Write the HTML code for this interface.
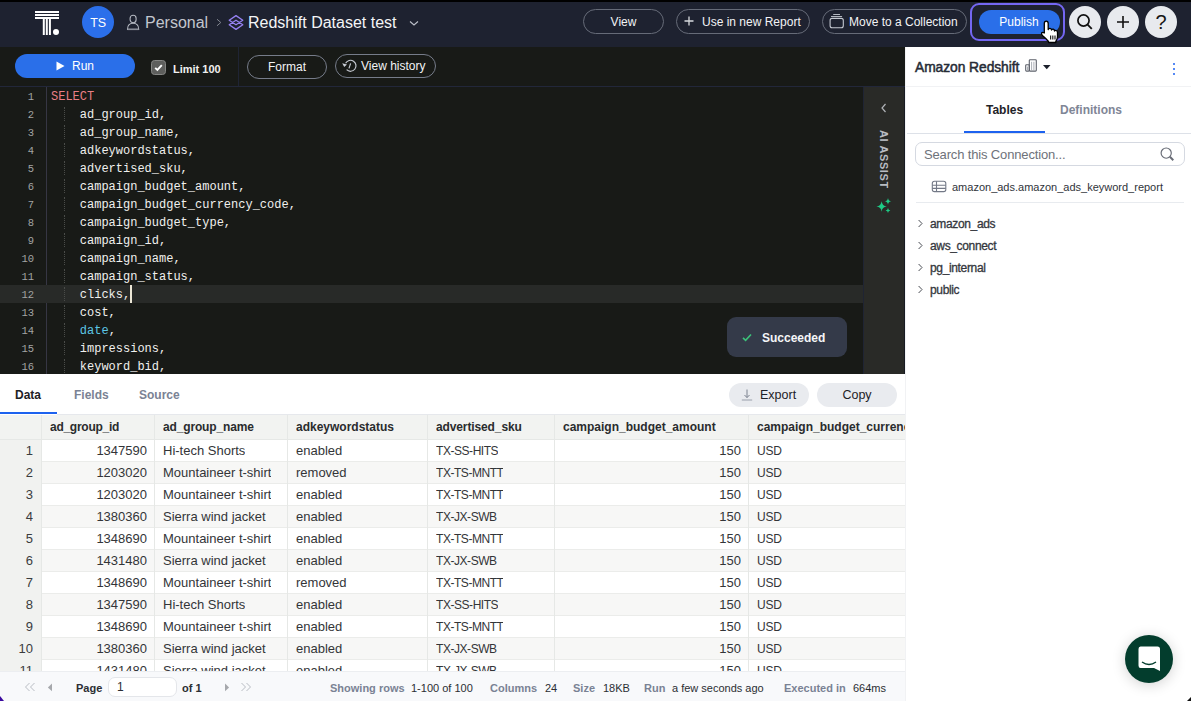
<!DOCTYPE html>
<html><head><meta charset="utf-8">
<style>
*{box-sizing:border-box;margin:0;padding:0}
html,body{width:1191px;height:701px;overflow:hidden;background:#fff;font-family:"Liberation Sans",sans-serif}
.a{position:absolute}
#top{left:0;top:0;width:1191px;height:2px;background:#000}
#hdr{left:0;top:2px;width:1191px;height:45px;background:#1e2230}
.pill{position:absolute;border:1px solid #666b78;border-radius:13px;color:#f2f3f5;font-size:12px;line-height:23px;padding-top:1px;white-space:nowrap}
.circ{position:absolute;width:32px;height:32px;border-radius:50%;background:#e8eaee;top:6px}
#tb{left:0;top:47px;width:905px;height:40px;background:#181a17;border-bottom:1px solid #22273a}
#ed{left:0;top:87px;width:863px;height:287px;background:#181a17;overflow:hidden}
.ln{position:absolute;left:0;width:34px;text-align:right;font:10.5px/18px "Liberation Mono",monospace;color:#a3a5a4}
.cd{position:absolute;left:51px;font:12px/18px "Liberation Mono",monospace;color:#f0f0ee;white-space:pre}
#side{left:863px;top:87px;width:42px;height:287px;background:#292a27;border-left:1px solid #1f2433;border-right:1px solid #181b22}
#rp{left:905px;top:47px;width:286px;height:654px;background:#fff;border-left:1px solid #f1f2f4}
#res{left:0;top:374px;width:905px;height:327px;background:#fff;overflow:hidden}
.th{position:absolute;top:0;height:24px;font:bold 12px/24px "Liberation Sans",sans-serif;color:#2a2c2e;white-space:nowrap;overflow:hidden}
.td{position:absolute;height:22px;font:13px/22px "Liberation Sans",sans-serif;color:#333538;white-space:nowrap;overflow:hidden}
</style></head><body>
<div id="top" class="a"></div>
<div id="hdr" class="a"></div>

<!-- logo -->
<svg class="a" style="left:34px;top:10px" width="26" height="26" viewBox="0 0 26 26">
  <rect x="1" y="1" width="24" height="2" fill="#fff"/>
  <rect x="1" y="4" width="24" height="2" fill="#fff"/>
  <rect x="1" y="7" width="24" height="2" fill="#fff"/>
  <rect x="8.8" y="9" width="2" height="16" fill="#fff"/>
  <rect x="11.8" y="9" width="2" height="16" fill="#fff"/>
  <rect x="14.9" y="9" width="2" height="16" fill="#fff"/>
  <circle cx="22" cy="22" r="3" fill="#fff"/>
</svg>

<!-- avatar -->
<div class="a" style="left:82px;top:6px;width:32px;height:32px;border-radius:50%;background:#2b6fea;color:#fff;font:12.5px/34px 'Liberation Sans';text-align:center;letter-spacing:-0.3px">TS</div>
<svg class="a" style="left:126px;top:14px" width="14" height="17" viewBox="0 0 14 17"><rect x="4.1" y="1.2" width="6" height="7.6" rx="3" fill="none" stroke="#b4b8c1" stroke-width="1.1"/><path d="M1.5 15.4 Q1.5 9.3 7.1 9.3 Q12.7 9.3 12.7 15.4 Z" fill="none" stroke="#b4b8c1" stroke-width="1.1"/><path d="M1.5 15.4 H12.7" stroke="#8a8e98" stroke-width="1.4"/></svg>
<div class="a" style="left:145px;top:13px;font:16px/20px 'Liberation Sans';color:#c3c6ce">Personal</div>
<svg class="a" style="left:215px;top:18px" width="8" height="9" viewBox="0 0 8 9"><path d="M2 1.2 L5.8 4.5 L2 7.8" fill="none" stroke="#80848e" stroke-width="1"/></svg>
<svg class="a" style="left:228px;top:14px" width="16" height="17" viewBox="0 0 16 17"><path d="M8 1.6 L14.8 6.2 L8 10.8 L1.2 6.2 Z M8 6.2 L14.8 10.8 L8 15.4 L1.2 10.8 Z" fill="none" stroke="#9682f3" stroke-width="1.3" stroke-linejoin="round"/></svg>
<div class="a" style="left:248px;top:13px;font:16px/20px 'Liberation Sans';color:#f4f5f7">Redshift Dataset test</div>
<svg class="a" style="left:409px;top:20px" width="10" height="7" viewBox="0 0 10 7"><path d="M1 1.5 L5 5 L9 1.5" fill="none" stroke="#bcc0c9" stroke-width="1.1"/></svg>

<!-- header buttons -->
<div class="pill" style="left:583px;top:9px;width:81px;height:25px;text-align:center">View</div>
<div class="pill" style="left:676px;top:9px;width:134px;height:25px;padding-left:25px">Use in new Report</div>
<svg class="a" style="left:684px;top:16px" width="10" height="10" viewBox="0 0 10 10"><path d="M5 0.5 V9.5 M0.5 5 H9.5" stroke="#d8dade" stroke-width="1.3"/></svg>
<div class="pill" style="left:822px;top:9px;width:145px;height:25px;padding-left:26px">Move to a Collection</div>
<svg class="a" style="left:829px;top:13px" width="16" height="16" viewBox="0 0 16 16"><path d="M4.6 1.5 H10.6 M2.4 3.5 H12.7" stroke="#c4c8d0" stroke-width="0.9" stroke-linecap="round"/><rect x="1.1" y="5.4" width="13.2" height="9.4" rx="2" fill="none" stroke="#c4c8d0" stroke-width="1.1"/></svg>
<div class="a" style="left:970px;top:3px;width:95px;height:38px;border:2px solid #7467f2;border-radius:9px"></div>
<div class="a" style="left:979px;top:10px;width:81px;height:24px;border-radius:12px;background:#2a6fe9;color:#fff;font:12px/24px 'Liberation Sans';text-align:center;padding-right:1px">Publish</div>
<div class="circ" style="left:1069px"></div>
<div class="circ" style="left:1107px"></div>
<div class="circ" style="left:1145px"></div>
<svg class="a" style="left:1076px;top:13px" width="18" height="18" viewBox="0 0 18 18"><circle cx="7.5" cy="7.5" r="5.6" fill="none" stroke="#111" stroke-width="1.7"/><path d="M11.6 11.6 L15.8 15.8" stroke="#111" stroke-width="1.8"/></svg>
<svg class="a" style="left:1116px;top:15px" width="14" height="14" viewBox="0 0 14 14"><path d="M7 1 V13 M1 7 H13" stroke="#111" stroke-width="1.6"/></svg>
<div class="a" style="left:1145px;top:6px;width:32px;height:32px;font:20px/32px 'Liberation Sans';color:#151515;text-align:center">?</div>
<!-- cursor -->
<svg class="a" style="left:1038px;top:20px" width="24" height="24" viewBox="0 0 24 24"><path d="M8.2 1.2 Q10.2 1.2 10.2 3.5 L10.2 9.5 Q10.5 8.2 12 8.3 Q13.5 8.5 13.5 10 Q14 9 15.3 9.2 Q16.5 9.5 16.5 11 Q17 10.2 18.2 10.5 Q19.5 11 19.5 12.5 L19.5 17 Q19.3 19.5 17.8 21.5 L17.8 22.5 L10.5 22.5 L10.5 21.5 Q8.5 19 5 16 Q3 14.2 3.6 13 Q4.5 11.8 6.3 13 L6.3 3.5 Q6.3 1.2 8.2 1.2 Z" fill="#fff" stroke="#000" stroke-width="1.3" stroke-linejoin="round"/><path d="M12.6 15.5 V19.5 M14.8 15.5 V19.5 M17 15.5 V19.5" stroke="#222" stroke-width="1.2"/></svg>

<!-- editor toolbar -->
<div id="tb" class="a"></div>
<div class="a" style="left:238px;top:47px;width:1px;height:39px;background:#1f2434"></div>
<div class="a" style="left:15px;top:54px;width:120px;height:24px;border-radius:12px;background:#2a6fe9;color:#fff;font:12px/24px 'Liberation Sans';padding-left:57px">Run</div>
<svg class="a" style="left:56px;top:61px" width="9" height="10" viewBox="0 0 9 10"><path d="M0.5 0.5 L8.5 5 L0.5 9.5 Z" fill="#fff"/></svg>
<div class="a" style="left:151px;top:60px;width:15px;height:15px;border-radius:3.5px;background:#5e5f5d;border:1px solid #858684"></div>
<svg class="a" style="left:153px;top:62px" width="11" height="11" viewBox="0 0 11 11"><path d="M2.2 5.8 L4.4 8 L8.8 3.2" fill="none" stroke="#fff" stroke-width="1.9"/></svg>
<div class="a" style="left:173px;top:61px;font:bold 11px/16px 'Liberation Sans';color:#f0f0f0">Limit 100</div>
<div class="pill" style="left:247px;top:55px;width:80px;height:24px;text-align:center;border-color:#767c8a;padding-top:0">Format</div>
<div class="pill" style="left:335px;top:54px;width:101px;height:24px;padding-left:25px;padding-top:0;border-color:#767c8a">View history</div>
<svg class="a" style="left:338px;top:55px" width="24" height="22" viewBox="0 0 24 22"><path d="M7.6 8.3 A5.5 5.5 0 1 1 8.61 14.69" fill="none" stroke="#c9cdd5" stroke-width="1.15"/><path d="M4.2 8.2 L9.0 9.4 L6.2 12.0 Z" fill="#c9cdd5"/><path d="M12.6 8.3 L11.0 13.4" stroke="#c9cdd5" stroke-width="1.15"/></svg>

<!-- editor -->
<div id="ed" class="a">
  <div class="a" style="left:46px;top:0;width:1px;height:288px;background:#363644"></div>
  <div class="a" style="left:0;top:198px;width:863px;height:18px;background:#282a28"></div>
  <div class="a" style="left:64px;top:20px;width:0;height:14px;border-left:1px dotted #4a4c49"></div><div class="a" style="left:64px;top:38px;width:0;height:14px;border-left:1px dotted #4a4c49"></div><div class="a" style="left:64px;top:56px;width:0;height:14px;border-left:1px dotted #4a4c49"></div><div class="a" style="left:64px;top:74px;width:0;height:14px;border-left:1px dotted #4a4c49"></div><div class="a" style="left:64px;top:92px;width:0;height:14px;border-left:1px dotted #4a4c49"></div><div class="a" style="left:64px;top:110px;width:0;height:14px;border-left:1px dotted #4a4c49"></div><div class="a" style="left:64px;top:128px;width:0;height:14px;border-left:1px dotted #4a4c49"></div><div class="a" style="left:64px;top:146px;width:0;height:14px;border-left:1px dotted #4a4c49"></div><div class="a" style="left:64px;top:164px;width:0;height:14px;border-left:1px dotted #4a4c49"></div><div class="a" style="left:64px;top:182px;width:0;height:14px;border-left:1px dotted #4a4c49"></div><div class="a" style="left:64px;top:200px;width:0;height:14px;border-left:1px dotted #4a4c49"></div><div class="a" style="left:64px;top:218px;width:0;height:14px;border-left:1px dotted #4a4c49"></div><div class="a" style="left:64px;top:236px;width:0;height:14px;border-left:1px dotted #4a4c49"></div><div class="a" style="left:64px;top:254px;width:0;height:14px;border-left:1px dotted #4a4c49"></div><div class="a" style="left:64px;top:272px;width:0;height:14px;border-left:1px dotted #4a4c49"></div>
  <div class="ln" style="top:1px">1</div>
  <div class="ln" style="top:19px">2</div>
  <div class="ln" style="top:37px">3</div>
  <div class="ln" style="top:55px">4</div>
  <div class="ln" style="top:73px">5</div>
  <div class="ln" style="top:91px">6</div>
  <div class="ln" style="top:109px">7</div>
  <div class="ln" style="top:127px">8</div>
  <div class="ln" style="top:145px">9</div>
  <div class="ln" style="top:163px">10</div>
  <div class="ln" style="top:181px">11</div>
  <div class="ln" style="top:199px">12</div>
  <div class="ln" style="top:217px">13</div>
  <div class="ln" style="top:235px">14</div>
  <div class="ln" style="top:253px">15</div>
  <div class="ln" style="top:271px">16</div>
  <div class="cd" style="top:1px;color:#e97f86">SELECT</div>
  <div class="cd" style="top:19px">    ad_group_id,</div>
  <div class="cd" style="top:37px">    ad_group_name,</div>
  <div class="cd" style="top:55px">    adkeywordstatus,</div>
  <div class="cd" style="top:73px">    advertised_sku,</div>
  <div class="cd" style="top:91px">    campaign_budget_amount,</div>
  <div class="cd" style="top:109px">    campaign_budget_currency_code,</div>
  <div class="cd" style="top:127px">    campaign_budget_type,</div>
  <div class="cd" style="top:145px">    campaign_id,</div>
  <div class="cd" style="top:163px">    campaign_name,</div>
  <div class="cd" style="top:181px">    campaign_status,</div>
  <div class="cd" style="top:199px">    clicks,</div>
  <div class="cd" style="top:217px">    cost,</div>
  <div class="cd" style="top:235px">    <span style="color:#5cc6e4">date</span>,</div>
  <div class="cd" style="top:253px">    impressions,</div>
  <div class="cd" style="top:271px">    keyword_bid,</div>
  <div class="a" style="left:130px;top:198px;width:2px;height:18px;background:#ebe6d6"></div>
  <!-- toast -->
  <div class="a" style="left:727px;top:230px;width:120px;height:40px;border-radius:9px;background:#343a49"></div>
  <svg class="a" style="left:742px;top:246px" width="10" height="9" viewBox="0 0 10 9"><path d="M1 4.8 L3.6 7.3 L9 1.5" fill="none" stroke="#3cc27a" stroke-width="1.6"/></svg>
  <div class="a" style="left:762px;top:243px;font:bold 12px/16px 'Liberation Sans';color:#f4f5f7">Succeeded</div>
</div>

<!-- AI assist side -->
<div id="side" class="a"></div>
<svg class="a" style="left:880px;top:103px" width="8" height="10" viewBox="0 0 8 10"><path d="M5.5 1 L2 5 L5.5 9" fill="none" stroke="#b0b3b8" stroke-width="1.2"/></svg>
<div class="a" style="left:856px;top:152px;width:56px;height:12px;transform:rotate(90deg);font:bold 11px/12px 'Liberation Sans';color:#b9bcc2;letter-spacing:0.6px;text-align:center;white-space:nowrap">AI ASSIST</div>
<svg class="a" style="left:870px;top:190px" width="30" height="30" viewBox="0 0 30 30"><path d="M11.6 11.3 Q12.12 15.98 16.8 16.5 Q12.12 17.02 11.6 21.7 Q11.08 17.02 6.3999999999999995 16.5 Q11.08 15.98 11.6 11.3Z M18 7.9 Q18.34 10.96 21.4 11.3 Q18.34 11.64 18 14.700000000000001 Q17.66 11.64 14.6 11.3 Q17.66 10.96 18 7.9Z M18 18.1 Q18.24 20.26 20.4 20.5 Q18.24 20.74 18 22.9 Q17.76 20.74 15.6 20.5 Q17.76 20.26 18 18.1Z" fill="#1ecb86"/></svg>

<!-- right panel -->
<div id="rp" class="a">
  <div class="a" style="left:9px;top:12.5px;font:13.8px/16px 'Liberation Sans';color:#262b36;white-space:nowrap;-webkit-text-stroke:0.5px #262b36;letter-spacing:-0.05px">Amazon Redshift</div>
  <svg class="a" style="left:118px;top:11px" width="14" height="15" viewBox="0 0 14 15"><rect x="1.7" y="6.8" width="3.6" height="6.3" rx="0.8" fill="none" stroke="#5d616b" stroke-width="1.1"/><rect x="5.3" y="1.8" width="7" height="11.3" rx="0.8" fill="none" stroke="#5d616b" stroke-width="1.1"/><path d="M3.5 8.6 V12.2 M7.6 3.8 V12.2 M9.9 3.8 V12.2" stroke="#a2a6ae" stroke-width="0.9"/></svg>
  <svg class="a" style="left:137px;top:18px" width="8" height="5" viewBox="0 0 8 5"><path d="M0 0 H7.5 L3.75 4.2 Z" fill="#1c202b"/></svg>
  <div class="a" style="left:266.8px;top:15.5px;width:2.4px;height:2.4px;border-radius:50%;background:#1c62f2"></div>
  <div class="a" style="left:266.8px;top:20.5px;width:2.4px;height:2.4px;border-radius:50%;background:#1c62f2"></div>
  <div class="a" style="left:266.8px;top:25.5px;width:2.4px;height:2.4px;border-radius:50%;background:#1c62f2"></div>
  <div class="a" style="left:0;top:39px;width:286px;height:1px;background:#f1f2f4"></div>
  <div class="a" style="left:80px;top:55px;font:bold 12px/16px 'Liberation Sans';color:#1f2329">Tables</div>
  <div class="a" style="left:154px;top:55px;font:bold 12px/16px 'Liberation Sans';color:#7f8696">Definitions</div>
  <div class="a" style="left:58px;top:84px;width:81px;height:2px;background:#1d62ef"></div>
  <div class="a" style="left:1px;top:86px;width:285px;height:1px;background:#dde1e8"></div>
  <div class="a" style="left:9px;top:95px;width:270px;height:24px;border:1px solid #d5d9e1;border-radius:7px"></div>
  <div class="a" style="left:18px;top:101px;font:13px/14px 'Liberation Sans';color:#6e727a;white-space:nowrap;letter-spacing:-0.15px">Search this Connection...</div>
  <svg class="a" style="left:254px;top:100px" width="16" height="16" viewBox="0 0 16 16"><circle cx="6.2" cy="6.1" r="5.1" fill="none" stroke="#686c76" stroke-width="1.15"/><path d="M9.9 9.8 L13.3 13.2" stroke="#686c76" stroke-width="2"/></svg>
  <svg class="a" style="left:25px;top:133px" width="16" height="13" viewBox="0 0 16 13"><rect x="1.3" y="1.3" width="13.5" height="10.3" rx="2.2" fill="none" stroke="#737987" stroke-width="1.1"/><path d="M1.3 5.3 H14.8 M1.3 8.4 H14.8 M5.5 1.3 V11.6" stroke="#737987" stroke-width="1.1"/></svg>
  <div class="a" style="left:46px;top:133px;font:11px/14px 'Liberation Sans';color:#30343b;white-space:nowrap">amazon_ads.amazon_ads_keyword_report</div>
  <div class="a" style="left:10px;top:155px;width:268px;height:1px;background:#e8ebef"></div>
  <svg class="a" style="left:11px;top:172px" width="7" height="9" viewBox="0 0 7 9"><path d="M1.6 1 L5 4.5 L1.6 8" fill="none" stroke="#4a4d54" stroke-width="1"/></svg>
  <div class="a" style="left:24px;top:170px;font:12px/14px 'Liberation Sans';color:#34373d;white-space:nowrap;letter-spacing:-0.35px;-webkit-text-stroke:0.3px #34373d">amazon_ads</div>
  <svg class="a" style="left:11px;top:194px" width="7" height="9" viewBox="0 0 7 9"><path d="M1.6 1 L5 4.5 L1.6 8" fill="none" stroke="#4a4d54" stroke-width="1"/></svg>
  <div class="a" style="left:24px;top:192px;font:12px/14px 'Liberation Sans';color:#34373d;white-space:nowrap;letter-spacing:-0.35px;-webkit-text-stroke:0.3px #34373d">aws_connect</div>
  <svg class="a" style="left:11px;top:216px" width="7" height="9" viewBox="0 0 7 9"><path d="M1.6 1 L5 4.5 L1.6 8" fill="none" stroke="#4a4d54" stroke-width="1"/></svg>
  <div class="a" style="left:24px;top:214px;font:12px/14px 'Liberation Sans';color:#34373d;white-space:nowrap;letter-spacing:-0.35px;-webkit-text-stroke:0.3px #34373d">pg_internal</div>
  <svg class="a" style="left:11px;top:238px" width="7" height="9" viewBox="0 0 7 9"><path d="M1.6 1 L5 4.5 L1.6 8" fill="none" stroke="#4a4d54" stroke-width="1"/></svg>
  <div class="a" style="left:24px;top:236px;font:12px/14px 'Liberation Sans';color:#34373d;white-space:nowrap;letter-spacing:-0.35px;-webkit-text-stroke:0.3px #34373d">public</div>
</div>

<!-- results -->
<div id="res" class="a">
  <div class="a" style="left:15px;top:13px;font:bold 12px/16px 'Liberation Sans';color:#1d2126">Data</div>
  <div class="a" style="left:74px;top:13px;font:bold 12px/16px 'Liberation Sans';color:#7a8294">Fields</div>
  <div class="a" style="left:139px;top:13px;font:bold 12px/16px 'Liberation Sans';color:#7a8294">Source</div>
  <div class="a" style="left:0;top:38px;width:57px;height:2px;background:#1d62ef"></div>
  <div class="a" style="left:57px;top:40px;width:848px;height:1px;background:#e6e8ec"></div>
  <div class="a" style="left:729px;top:8.5px;width:80px;height:24px;border-radius:12px;background:#e9ebef"></div>
  <svg class="a" style="left:741px;top:15px" width="12" height="12" viewBox="0 0 12 12"><path d="M6 0.5 V8.5 M3.5 6 L6 8.6 L8.5 6" fill="none" stroke="#7d8390" stroke-width="1"/><path d="M0.8 11 H11.2" stroke="#9aa0ab" stroke-width="1"/></svg>
  <div class="a" style="left:760px;top:13px;font:12.5px/16px 'Liberation Sans';color:#1d2126">Export</div>
  <div class="a" style="left:817px;top:8.5px;width:80px;height:24px;border-radius:12px;background:#e9ebef;font:12.5px/25px 'Liberation Sans';color:#1d2126;text-align:center">Copy</div>
  <div id="grid" class="a" style="left:0;top:41px;width:905px;height:257px;overflow:hidden">
<div class="a" style="left:0;top:0;width:905px;height:25px;background:#f2f3f1;border-bottom:1px solid #e6e8e6"></div>
<div class="a" style="left:0;top:25px;width:41px;height:240px;background:#f1f2f0"></div>
<div class="a" style="left:41px;top:25px;width:864px;height:22px;background:#ffffff;border-bottom:1px solid #ebecea"></div>
<div class="a" style="left:41px;top:47px;width:864px;height:22px;background:#f7f7f6;border-bottom:1px solid #ebecea"></div>
<div class="a" style="left:41px;top:69px;width:864px;height:22px;background:#ffffff;border-bottom:1px solid #ebecea"></div>
<div class="a" style="left:41px;top:91px;width:864px;height:22px;background:#f7f7f6;border-bottom:1px solid #ebecea"></div>
<div class="a" style="left:41px;top:113px;width:864px;height:22px;background:#ffffff;border-bottom:1px solid #ebecea"></div>
<div class="a" style="left:41px;top:135px;width:864px;height:22px;background:#f7f7f6;border-bottom:1px solid #ebecea"></div>
<div class="a" style="left:41px;top:157px;width:864px;height:22px;background:#ffffff;border-bottom:1px solid #ebecea"></div>
<div class="a" style="left:41px;top:179px;width:864px;height:22px;background:#f7f7f6;border-bottom:1px solid #ebecea"></div>
<div class="a" style="left:41px;top:201px;width:864px;height:22px;background:#ffffff;border-bottom:1px solid #ebecea"></div>
<div class="a" style="left:41px;top:223px;width:864px;height:22px;background:#f7f7f6;border-bottom:1px solid #ebecea"></div>
<div class="a" style="left:41px;top:245px;width:864px;height:22px;background:#ffffff;border-bottom:1px solid #ebecea"></div>
<div class="a" style="left:41px;top:0;width:1px;height:264px;background:#e6e8e6"></div>
<div class="a" style="left:154px;top:0;width:1px;height:264px;background:#e6e8e6"></div>
<div class="a" style="left:287px;top:0;width:1px;height:264px;background:#e6e8e6"></div>
<div class="a" style="left:427px;top:0;width:1px;height:264px;background:#e6e8e6"></div>
<div class="a" style="left:554px;top:0;width:1px;height:264px;background:#e6e8e6"></div>
<div class="a" style="left:748px;top:0;width:1px;height:264px;background:#e6e8e6"></div>
<div class="th" style="left:50px;letter-spacing:-0.27px">ad_group_id</div>
<div class="th" style="left:163px;letter-spacing:-0.15px">ad_group_name</div>
<div class="th" style="left:296px;letter-spacing:0px">adkeywordstatus</div>
<div class="th" style="left:436px;letter-spacing:-0.12px">advertised_sku</div>
<div class="th" style="left:563px;letter-spacing:0px">campaign_budget_amount</div>
<div class="th" style="left:757px;letter-spacing:0px">campaign_budget_currency_code</div>
<div class="td" style="left:0;top:25px;width:33px;text-align:right;color:#3a3c3e">1</div>
<div class="td" style="left:42px;top:25px;width:105px;text-align:right">1347590</div>
<div class="td" style="left:163px;top:25px">Hi-tech Shorts</div>
<div class="td" style="left:296px;top:25px">enabled</div>
<div class="td" style="left:436px;top:25px;font-size:12px;letter-spacing:-0.45px">TX-SS-HITS</div>
<div class="td" style="left:555px;top:25px;width:186px;text-align:right">150</div>
<div class="td" style="left:757px;top:25px;font-size:12px;letter-spacing:-0.2px">USD</div>
<div class="td" style="left:0;top:47px;width:33px;text-align:right;color:#3a3c3e">2</div>
<div class="td" style="left:42px;top:47px;width:105px;text-align:right">1203020</div>
<div class="td" style="left:163px;top:47px">Mountaineer t-shirt</div>
<div class="td" style="left:296px;top:47px">removed</div>
<div class="td" style="left:436px;top:47px;font-size:12px;letter-spacing:-0.45px">TX-TS-MNTT</div>
<div class="td" style="left:555px;top:47px;width:186px;text-align:right">150</div>
<div class="td" style="left:757px;top:47px;font-size:12px;letter-spacing:-0.2px">USD</div>
<div class="td" style="left:0;top:69px;width:33px;text-align:right;color:#3a3c3e">3</div>
<div class="td" style="left:42px;top:69px;width:105px;text-align:right">1203020</div>
<div class="td" style="left:163px;top:69px">Mountaineer t-shirt</div>
<div class="td" style="left:296px;top:69px">enabled</div>
<div class="td" style="left:436px;top:69px;font-size:12px;letter-spacing:-0.45px">TX-TS-MNTT</div>
<div class="td" style="left:555px;top:69px;width:186px;text-align:right">150</div>
<div class="td" style="left:757px;top:69px;font-size:12px;letter-spacing:-0.2px">USD</div>
<div class="td" style="left:0;top:91px;width:33px;text-align:right;color:#3a3c3e">4</div>
<div class="td" style="left:42px;top:91px;width:105px;text-align:right">1380360</div>
<div class="td" style="left:163px;top:91px">Sierra wind jacket</div>
<div class="td" style="left:296px;top:91px">enabled</div>
<div class="td" style="left:436px;top:91px;font-size:12px;letter-spacing:-0.45px">TX-JX-SWB</div>
<div class="td" style="left:555px;top:91px;width:186px;text-align:right">150</div>
<div class="td" style="left:757px;top:91px;font-size:12px;letter-spacing:-0.2px">USD</div>
<div class="td" style="left:0;top:113px;width:33px;text-align:right;color:#3a3c3e">5</div>
<div class="td" style="left:42px;top:113px;width:105px;text-align:right">1348690</div>
<div class="td" style="left:163px;top:113px">Mountaineer t-shirt</div>
<div class="td" style="left:296px;top:113px">enabled</div>
<div class="td" style="left:436px;top:113px;font-size:12px;letter-spacing:-0.45px">TX-TS-MNTT</div>
<div class="td" style="left:555px;top:113px;width:186px;text-align:right">150</div>
<div class="td" style="left:757px;top:113px;font-size:12px;letter-spacing:-0.2px">USD</div>
<div class="td" style="left:0;top:135px;width:33px;text-align:right;color:#3a3c3e">6</div>
<div class="td" style="left:42px;top:135px;width:105px;text-align:right">1431480</div>
<div class="td" style="left:163px;top:135px">Sierra wind jacket</div>
<div class="td" style="left:296px;top:135px">enabled</div>
<div class="td" style="left:436px;top:135px;font-size:12px;letter-spacing:-0.45px">TX-JX-SWB</div>
<div class="td" style="left:555px;top:135px;width:186px;text-align:right">150</div>
<div class="td" style="left:757px;top:135px;font-size:12px;letter-spacing:-0.2px">USD</div>
<div class="td" style="left:0;top:157px;width:33px;text-align:right;color:#3a3c3e">7</div>
<div class="td" style="left:42px;top:157px;width:105px;text-align:right">1348690</div>
<div class="td" style="left:163px;top:157px">Mountaineer t-shirt</div>
<div class="td" style="left:296px;top:157px">removed</div>
<div class="td" style="left:436px;top:157px;font-size:12px;letter-spacing:-0.45px">TX-TS-MNTT</div>
<div class="td" style="left:555px;top:157px;width:186px;text-align:right">150</div>
<div class="td" style="left:757px;top:157px;font-size:12px;letter-spacing:-0.2px">USD</div>
<div class="td" style="left:0;top:179px;width:33px;text-align:right;color:#3a3c3e">8</div>
<div class="td" style="left:42px;top:179px;width:105px;text-align:right">1347590</div>
<div class="td" style="left:163px;top:179px">Hi-tech Shorts</div>
<div class="td" style="left:296px;top:179px">enabled</div>
<div class="td" style="left:436px;top:179px;font-size:12px;letter-spacing:-0.45px">TX-SS-HITS</div>
<div class="td" style="left:555px;top:179px;width:186px;text-align:right">150</div>
<div class="td" style="left:757px;top:179px;font-size:12px;letter-spacing:-0.2px">USD</div>
<div class="td" style="left:0;top:201px;width:33px;text-align:right;color:#3a3c3e">9</div>
<div class="td" style="left:42px;top:201px;width:105px;text-align:right">1348690</div>
<div class="td" style="left:163px;top:201px">Mountaineer t-shirt</div>
<div class="td" style="left:296px;top:201px">enabled</div>
<div class="td" style="left:436px;top:201px;font-size:12px;letter-spacing:-0.45px">TX-TS-MNTT</div>
<div class="td" style="left:555px;top:201px;width:186px;text-align:right">150</div>
<div class="td" style="left:757px;top:201px;font-size:12px;letter-spacing:-0.2px">USD</div>
<div class="td" style="left:0;top:223px;width:33px;text-align:right;color:#3a3c3e">10</div>
<div class="td" style="left:42px;top:223px;width:105px;text-align:right">1380360</div>
<div class="td" style="left:163px;top:223px">Sierra wind jacket</div>
<div class="td" style="left:296px;top:223px">enabled</div>
<div class="td" style="left:436px;top:223px;font-size:12px;letter-spacing:-0.45px">TX-JX-SWB</div>
<div class="td" style="left:555px;top:223px;width:186px;text-align:right">150</div>
<div class="td" style="left:757px;top:223px;font-size:12px;letter-spacing:-0.2px">USD</div>
<div class="td" style="left:0;top:245px;width:33px;text-align:right;color:#3a3c3e">11</div>
<div class="td" style="left:42px;top:245px;width:105px;text-align:right">1431480</div>
<div class="td" style="left:163px;top:245px">Sierra wind jacket</div>
<div class="td" style="left:296px;top:245px">enabled</div>
<div class="td" style="left:436px;top:245px;font-size:12px;letter-spacing:-0.45px">TX-JX-SWB</div>
<div class="td" style="left:555px;top:245px;width:186px;text-align:right">150</div>
<div class="td" style="left:757px;top:245px;font-size:12px;letter-spacing:-0.2px">USD</div>
</div><!--/grid-->
  <!-- footer -->
  <div class="a" style="left:0;top:297px;width:905px;height:30px;background:#f8f9fb;border-top:1px solid #eceef1"></div>
  <svg class="a" style="left:24px;top:308px" width="12" height="10" viewBox="0 0 12 10"><path d="M5.5 1 L1.5 5 L5.5 9 M10.5 1 L6.5 5 L10.5 9" fill="none" stroke="#b0b4bc" stroke-width="0.9"/></svg>
  <svg class="a" style="left:47px;top:309px" width="6" height="9" viewBox="0 0 6 9"><path d="M5 0.4 L0.9 4.4 L5 8.2 Z" fill="#a6a8ac"/></svg>
  <div class="a" style="left:76px;top:307px;font:bold 11px/14px 'Liberation Sans';color:#2b2e33">Page</div>
  <div class="a" style="left:108px;top:303px;width:69px;height:20px;background:#fff;border:1px solid #e4e6ea;border-radius:7px;font:12px/18px 'Liberation Sans';color:#2b2e33;padding-left:8px">1</div>
  <div class="a" style="left:182px;top:307px;font:bold 11px/14px 'Liberation Sans';color:#2b2e33">of 1</div>
  <svg class="a" style="left:224px;top:309px" width="6" height="9" viewBox="0 0 6 9"><path d="M1 0.4 L5.1 4.4 L1 8.2 Z" fill="#a6a8ac"/></svg>
  <svg class="a" style="left:240px;top:308px" width="12" height="10" viewBox="0 0 12 10"><path d="M1.5 1 L5.5 5 L1.5 9 M6.5 1 L10.5 5 L6.5 9" fill="none" stroke="#b0b4bc" stroke-width="0.9"/></svg>
  <div class="a" style="left:330px;top:307px;font:bold 11px/14px 'Liberation Sans';color:#7a8294;white-space:nowrap">Showing rows</div>
  <div class="a" style="left:411px;top:307px;font:11px/14px 'Liberation Sans';color:#2b2e33;white-space:nowrap">1-100 of 100</div>
  <div class="a" style="left:490px;top:307px;font:bold 11px/14px 'Liberation Sans';color:#7a8294">Columns</div>
  <div class="a" style="left:545px;top:307px;font:11px/14px 'Liberation Sans';color:#2b2e33">24</div>
  <div class="a" style="left:573px;top:307px;font:bold 11px/14px 'Liberation Sans';color:#7a8294">Size</div>
  <div class="a" style="left:603px;top:307px;font:11px/14px 'Liberation Sans';color:#2b2e33">18KB</div>
  <div class="a" style="left:644px;top:307px;font:bold 11px/14px 'Liberation Sans';color:#7a8294">Run</div>
  <div class="a" style="left:672px;top:307px;font:11px/14px 'Liberation Sans';color:#2b2e33;white-space:nowrap">a few seconds ago</div>
  <div class="a" style="left:784px;top:307px;font:bold 11px/14px 'Liberation Sans';color:#7a8294;white-space:nowrap">Executed in</div>
  <div class="a" style="left:853px;top:307px;font:11px/14px 'Liberation Sans';color:#2b2e33">664ms</div>
</div>

<!-- chat -->
<div class="a" style="left:1125px;top:635px;width:48px;height:48px;border-radius:50%;background:#033d2d;box-shadow:0 2px 14px rgba(0,0,0,0.18)"></div>
<svg class="a" style="left:1138px;top:646px" width="23" height="26" viewBox="0 0 23 26"><path d="M2.5 0.5 H19.5 Q22 0.5 22 3 V25 L16 22 H2.5 Q0.5 22 0.5 19.5 V3 Q0.5 0.5 2.5 0.5 Z" fill="#fff"/><path d="M4 16 Q11 21 18 16" fill="none" stroke="#033d2d" stroke-width="1.4"/></svg>
<svg class="a" style="left:0;top:696px" width="5" height="5" viewBox="0 0 5 5"><path d="M0 0 L4 5 H0 Z" fill="#3b0a9e"/></svg>
<svg class="a" style="left:1187px;top:697px" width="4" height="4" viewBox="0 0 4 4"><path d="M4 0 V4 H0 Z" fill="#111"/></svg>
</body></html>
